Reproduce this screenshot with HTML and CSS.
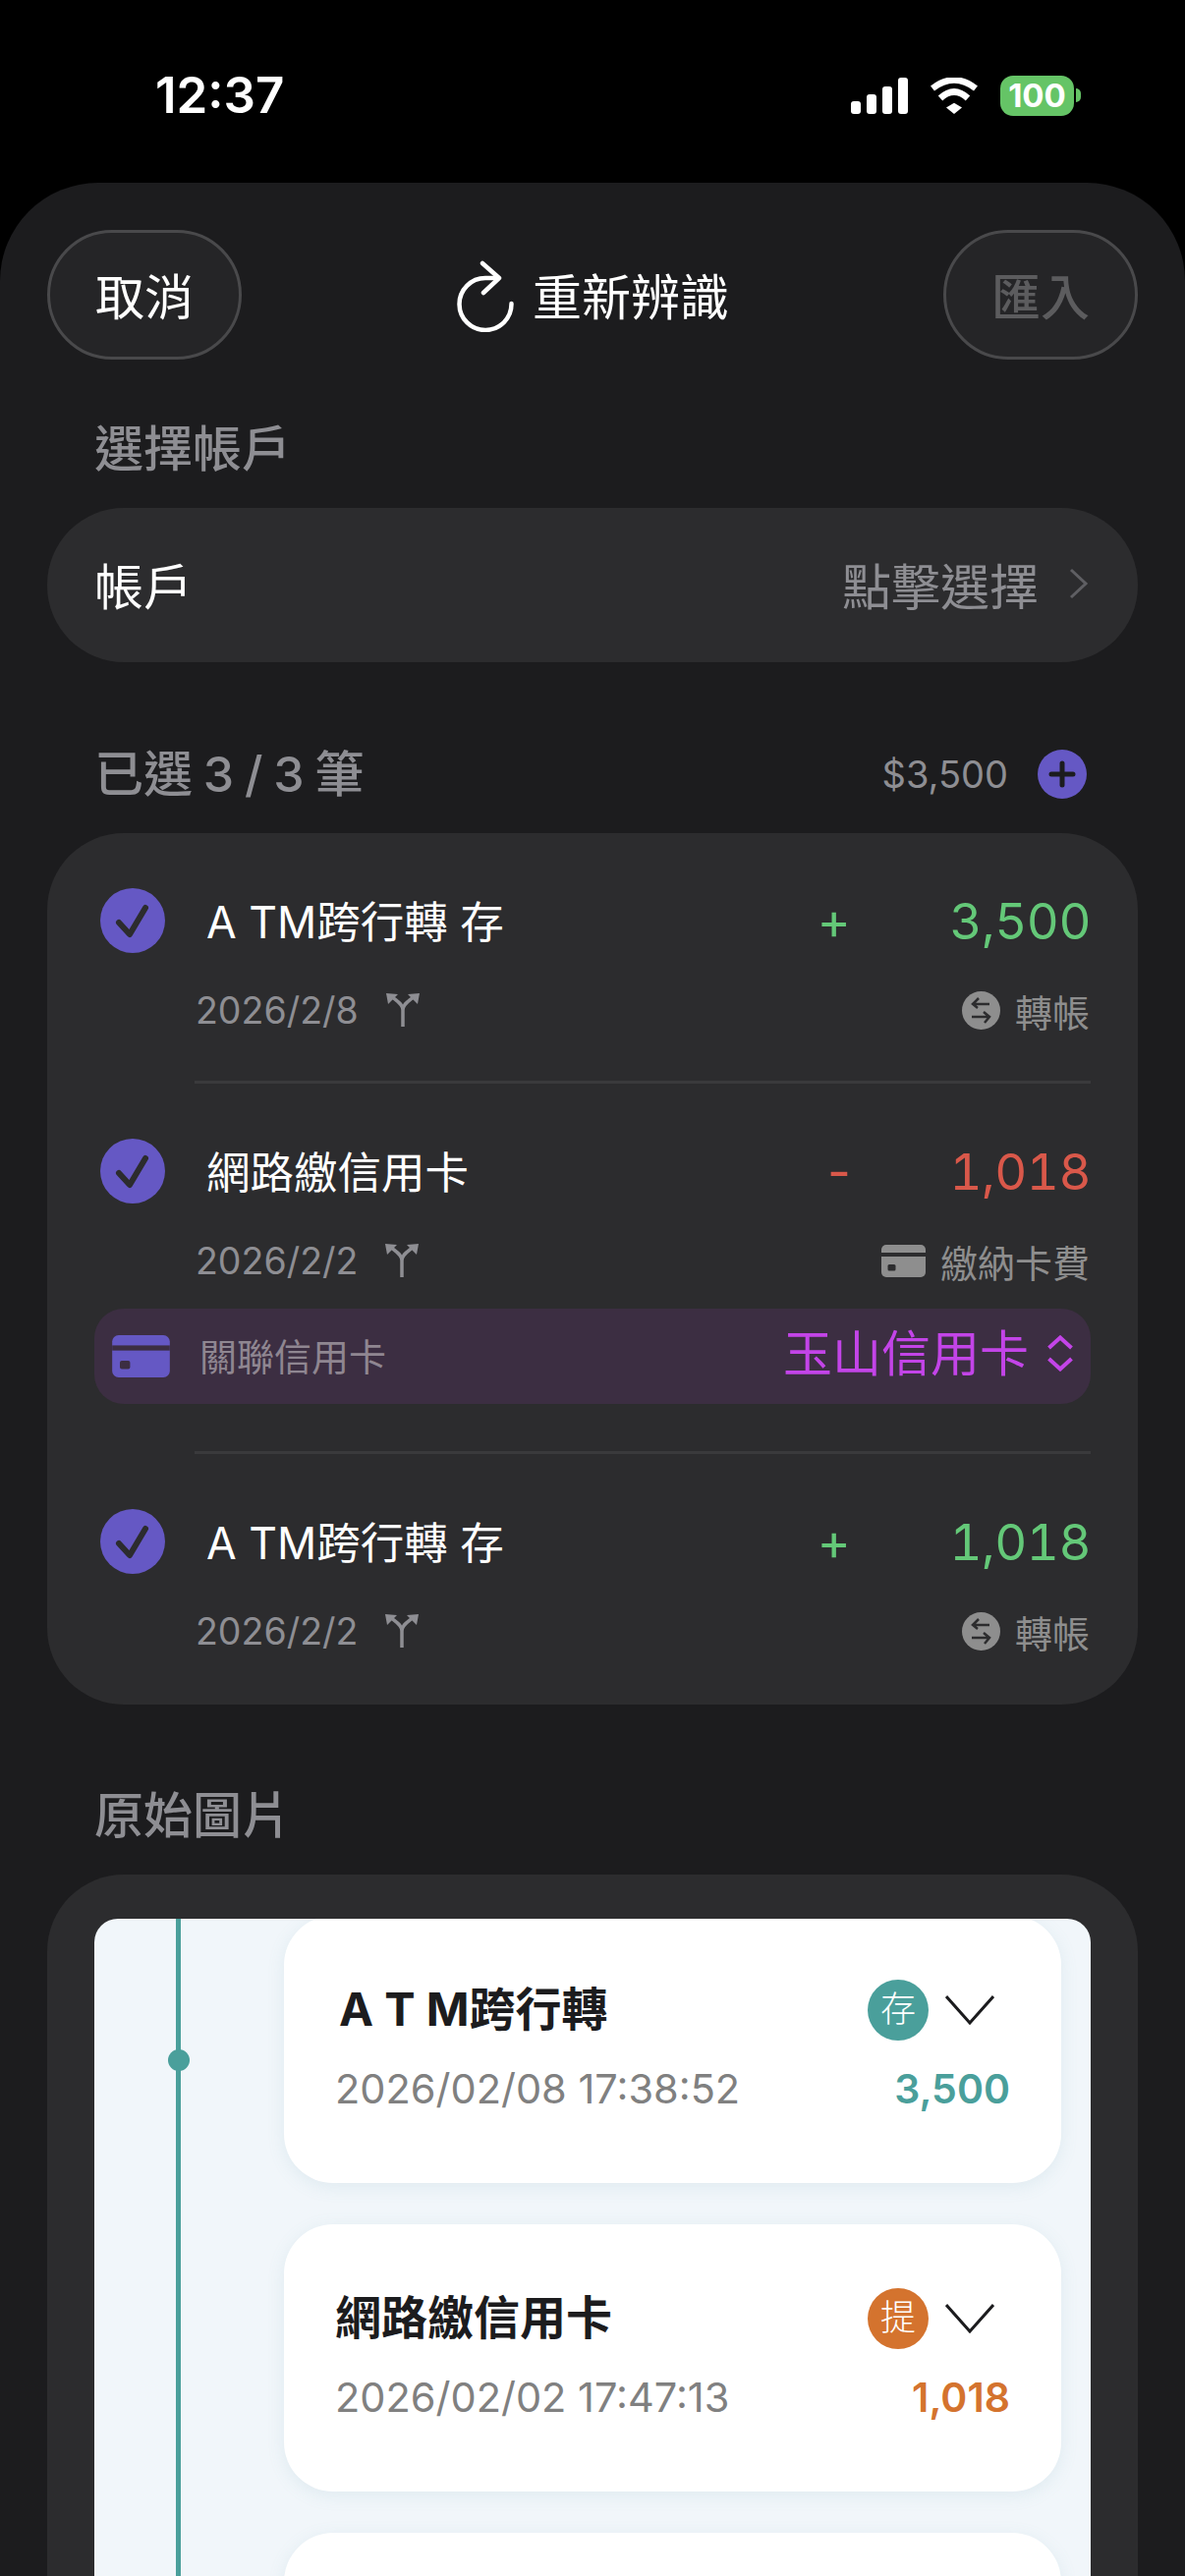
FILE: index.html
```html
<!DOCTYPE html>
<html lang="zh-Hant">
<head>
    <meta charset="UTF-8">
    <meta name="viewport" content="width=device-width, initial-scale=1.0">
    <title>重新辨識</title>
    <link rel="stylesheet" href="styles.css">
</head>
<body>
    <header class="statusbar">
        <div class="time">12:37</div>
        <div class="status-icons">
            <div class="signal"><span></span><span></span><span></span><span></span></div>
            <svg class="wifi" viewBox="0 0 50 37">
                <path d="M3 11Q25 -6 47 11" fill="none" stroke="#fff" stroke-width="6.5"/>
                <path d="M11 21Q25 8 39 21" fill="none" stroke="#fff" stroke-width="6.5"/>
                <path d="M17 30.6L25 25.7L33 30.6L25 37Z" fill="#fff"/>
            </svg>
            <div class="battery">
                <div class="battery-body">100</div>
                <div class="battery-nub"></div>
            </div>
        </div>
    </header>

    <main class="sheet">
        <div class="topbar">
            <button class="pill">取消</button>
            <div class="rescan">
                <svg class="rescan-icon" viewBox="0 0 60 75">
                    <path d="M42 20H30A26.5 26.5 0 1 0 56.5 46" fill="none" stroke="#fff" stroke-width="4.5" stroke-linecap="round"/>
                    <path d="M27 5L44 20L28 35" fill="none" stroke="#fff" stroke-width="4.5" stroke-linecap="round" stroke-linejoin="round"/>
                </svg>
                <span class="rescan-label">重新辨識</span>
            </div>
            <button class="pill pill-disabled">匯入</button>
        </div>

        <div class="section-label label-account">選擇帳戶</div>
        <div class="account-row">
            <span>帳戶</span>
            <div class="account-pick">
                <span>點擊選擇</span>
                <svg class="chevron-right" viewBox="0 0 20 32">
                    <path d="M2 2L17 16L2 30" fill="none" stroke="#5f5f63" stroke-width="3"/>
                </svg>
            </div>
        </div>

        <div class="selected-head">
            <div class="section-label selected-count">已選 3 / 3 筆</div>
            <div class="selected-total">
                <span>$3,500</span>
                <svg class="plus" viewBox="0 0 50 50">
                    <circle cx="25" cy="25" r="25" fill="#6558c4"/>
                    <path d="M14 25H36M25 14V36" stroke="#1c1c1e" stroke-width="5" stroke-linecap="round"/>
                </svg>
            </div>
        </div>

        <section class="card tx-card">
            <div class="tx">
                <div class="tx-main">
                    <svg class="check" viewBox="0 0 66 66">
                        <circle cx="33" cy="33" r="33" fill="#6558c4"/>
                        <path d="M19 35L30 47L46 20" fill="none" stroke="#2c2c2e" stroke-width="6" stroke-linecap="round" stroke-linejoin="round"/>
                    </svg>
                    <div class="tx-title">A TM跨行轉 存</div>
                    <div class="tx-sign green">+</div>
                    <div class="tx-amount green">3,500</div>
                </div>
                <div class="tx-meta">
                    <div class="tx-date">
                        <span>2026/2/8</span>
                        <svg class="split" viewBox="0 0 34 34">
                            <path d="M17 34V17C17 11 11 8 5 3M17 17C17 11 23 8 29 3" fill="none" stroke="#8e8e93" stroke-width="3.5"/>
                            <path d="M0 0L12 1L2 11ZM34 0L22 1L32 11Z" fill="#8e8e93"/>
                        </svg>
                    </div>
                    <div class="tx-type">
                        <svg class="transfer" viewBox="0 0 39 39">
                            <circle cx="19.5" cy="19.5" r="19.5" fill="#8e8e8e"/>
                            <path d="M28 13H11M17 7L11 13L16 17M10 26H28M22 21L28 26L23 32" fill="none" stroke="#2c2c2e" stroke-width="2.5"/>
                        </svg>
                        <span>轉帳</span>
                    </div>
                </div>
            </div>
            <div class="divider"></div>
            <div class="tx">
                <div class="tx-main">
                    <svg class="check" viewBox="0 0 66 66">
                        <circle cx="33" cy="33" r="33" fill="#6558c4"/>
                        <path d="M19 35L30 47L46 20" fill="none" stroke="#2c2c2e" stroke-width="6" stroke-linecap="round" stroke-linejoin="round"/>
                    </svg>
                    <div class="tx-title">網路繳信用卡</div>
                    <div class="tx-sign red">-</div>
                    <div class="tx-amount red">1,018</div>
                </div>
                <div class="tx-meta">
                    <div class="tx-date">
                        <span>2026/2/2</span>
                        <svg class="split" viewBox="0 0 34 34">
                            <path d="M17 34V17C17 11 11 8 5 3M17 17C17 11 23 8 29 3" fill="none" stroke="#8e8e93" stroke-width="3.5"/>
                            <path d="M0 0L12 1L2 11ZM34 0L22 1L32 11Z" fill="#8e8e93"/>
                        </svg>
                    </div>
                    <div class="tx-type">
                        <svg class="card-icon" viewBox="0 0 45 33">
                            <rect width="45" height="33" rx="5" fill="#8e8e8e"/>
                            <rect y="8" width="45" height="4" fill="#2c2c2e"/>
                            <rect x="6.5" y="20" width="8" height="6.5" rx="1.5" fill="#2c2c2e"/>
                        </svg>
                        <span>繳納卡費</span>
                    </div>
                </div>
                <div class="link-bar">
                    <svg class="card-icon-large" viewBox="0 0 45 33">
                        <rect width="45" height="33" rx="5" fill="#6558c4"/>
                        <rect y="8" width="45" height="4" fill="#3c2e42"/>
                        <rect x="6" y="20" width="8" height="6.5" rx="1.5" fill="#3c2e42"/>
                    </svg>
                    <span class="link-label">關聯信用卡</span>
                    <span class="link-value">玉山信用卡</span>
                    <svg class="updown" viewBox="0 0 26 37">
                        <path d="M1.5 13L13 2.5L24.5 13M1.5 24L13 34.5L24.5 24" fill="none" stroke="#c344e8" stroke-width="4"/>
                    </svg>
                </div>
            </div>
            <div class="divider"></div>
            <div class="tx">
                <div class="tx-main">
                    <svg class="check" viewBox="0 0 66 66">
                        <circle cx="33" cy="33" r="33" fill="#6558c4"/>
                        <path d="M19 35L30 47L46 20" fill="none" stroke="#2c2c2e" stroke-width="6" stroke-linecap="round" stroke-linejoin="round"/>
                    </svg>
                    <div class="tx-title">A TM跨行轉 存</div>
                    <div class="tx-sign green">+</div>
                    <div class="tx-amount green">1,018</div>
                </div>
                <div class="tx-meta">
                    <div class="tx-date">
                        <span>2026/2/2</span>
                        <svg class="split" viewBox="0 0 34 34">
                            <path d="M17 34V17C17 11 11 8 5 3M17 17C17 11 23 8 29 3" fill="none" stroke="#8e8e93" stroke-width="3.5"/>
                            <path d="M0 0L12 1L2 11ZM34 0L22 1L32 11Z" fill="#8e8e93"/>
                        </svg>
                    </div>
                    <div class="tx-type">
                        <svg class="transfer" viewBox="0 0 39 39">
                            <circle cx="19.5" cy="19.5" r="19.5" fill="#8e8e8e"/>
                            <path d="M28 13H11M17 7L11 13L16 17M10 26H28M22 21L28 26L23 32" fill="none" stroke="#2c2c2e" stroke-width="2.5"/>
                        </svg>
                        <span>轉帳</span>
                    </div>
                </div>
            </div>
        </section>

        <div class="section-label label-image">原始圖片</div>
        <section class="card image-card">
            <div class="shot">
                <div class="timeline"><div class="timeline-dot"></div></div>
                <div class="records">
                    <div class="record">
                        <div class="record-top">
                            <div class="record-title title-spaced">A T M跨行轉</div>
                            <div class="badge badge-teal">存</div>
                            <svg class="chevron-down" viewBox="0 0 50 30">
                                <path d="M1 1L25 28L49 1" fill="none" stroke="#1c1c1e" stroke-width="3"/>
                            </svg>
                        </div>
                        <div class="record-bottom">
                            <span class="record-date">2026/02/08 17:38:52</span>
                            <span class="record-amount teal">3,500</span>
                        </div>
                    </div>
                    <div class="record">
                        <div class="record-top">
                            <div class="record-title">網路繳信用卡</div>
                            <div class="badge badge-orange">提</div>
                            <svg class="chevron-down" viewBox="0 0 50 30">
                                <path d="M1 1L25 28L49 1" fill="none" stroke="#1c1c1e" stroke-width="3"/>
                            </svg>
                        </div>
                        <div class="record-bottom">
                            <span class="record-date">2026/02/02 17:47:13</span>
                            <span class="record-amount orange">1,018</span>
                        </div>
                    </div>
                    <div class="record record-empty"></div>
                </div>
            </div>
        </section>
    </main>
</body>
</html>
```

FILE: styles.css
```css
* {
    box-sizing: border-box;
}
html, body {
    margin: 0;
    padding: 0;
}
body {
    width: 1206px;
    height: 2622px;
    overflow: hidden;
    background: #000000;
    color: #ffffff;
    font-family: Inter, "Noto Sans CJK TC", sans-serif;
}
svg {
    display: block;
    flex-shrink: 0;
}

/* status bar */
.statusbar {
    height: 186px;
    padding: 67px 106px 0 158px;
    display: flex;
    justify-content: space-between;
    align-items: flex-start;
}
.time {
    font-size: 51px;
    line-height: 60px;
    font-weight: 600;
}
.status-icons {
    display: flex;
    align-items: center;
    height: 60px;
}
.signal {
    display: flex;
    align-items: flex-end;
    gap: 6px;
    height: 37px;
}
.signal span {
    width: 10px;
    background: #ffffff;
    border-radius: 3px;
}
.signal span:nth-child(1) { height: 13px; }
.signal span:nth-child(2) { height: 20px; }
.signal span:nth-child(3) { height: 28px; }
.signal span:nth-child(4) { height: 37px; }
.wifi {
    width: 50px;
    height: 37px;
    margin-left: 22px;
}
.battery {
    display: flex;
    align-items: center;
    gap: 2px;
    margin-left: 22px;
}
.battery-body {
    width: 75px;
    height: 41px;
    border-radius: 13px;
    background: #65c466;
    color: #ffffff;
    font-size: 33px;
    font-weight: 700;
    line-height: 41px;
    text-align: center;
}
.battery-nub {
    width: 5px;
    height: 14px;
    background: #65c466;
    border-radius: 0 5px 5px 0;
}

/* sheet */
.sheet {
    height: 2436px;
    overflow: hidden;
    padding: 48px 48px 0;
    background: #1c1c1e;
    border-radius: 100px 100px 0 0;
}
.topbar {
    display: flex;
    justify-content: space-between;
    align-items: center;
    height: 132px;
}
.pill {
    width: 198px;
    height: 132px;
    padding: 0 0 3px;
    border: 3px solid #49494b;
    border-radius: 66px;
    background: #252527;
    color: #ffffff;
    font-family: inherit;
    font-size: 50px;
}
.pill-disabled {
    color: #5c5c5e;
    font-weight: 500;
}
.rescan {
    display: flex;
    align-items: center;
    gap: 18px;
    font-size: 50px;
}
.rescan-label {
    padding-bottom: 3px;
}
.rescan-icon {
    width: 60px;
    height: 75px;
}
.section-label {
    padding-left: 48px;
    font-size: 50px;
    line-height: 60px;
    font-weight: 500;
    color: #8e8e93;
}
.label-account {
    margin-top: 61px;
}
.account-row {
    display: flex;
    justify-content: space-between;
    align-items: center;
    height: 157px;
    margin-top: 30px;
    padding: 0 50px 3px 48px;
    border-radius: 78px;
    background: #2c2c2e;
    font-size: 50px;
}
.account-pick {
    display: flex;
    align-items: center;
    gap: 31px;
    color: #8e8e93;
}
.chevron-right {
    width: 20px;
    height: 32px;
}
.selected-head {
    display: flex;
    justify-content: space-between;
    align-items: center;
    margin-top: 84px;
    height: 60px;
}
.selected-count {
    word-spacing: -2.5px;
}
.selected-total {
    display: flex;
    align-items: center;
    gap: 30px;
    padding-right: 52px;
    font-size: 38px;
    color: #8e8e93;
}
.plus {
    width: 50px;
    height: 50px;
}
.card {
    background: #2c2c2e;
    border-radius: 78px;
}

/* transactions */
.tx-card {
    height: 887px;
    margin-top: 30px;
}
.tx {
    padding: 56px 48px 0 54px;
}
.tx-main {
    display: flex;
    align-items: center;
    height: 66px;
}
.check {
    width: 66px;
    height: 66px;
}
.tx-title {
    flex: 1;
    margin: 0 0 3px 42px;
    font-size: 44.5px;
}
.tx-sign {
    width: 40px;
    font-size: 52px;
    text-align: right;
}
.tx-amount {
    width: 244px;
    font-size: 51px;
    font-variant-numeric: tabular-nums;
    letter-spacing: -0.5px;
    text-align: right;
}
.green { color: #64c878; }
.red { color: #d9584a; }
.tx-meta {
    display: flex;
    justify-content: space-between;
    align-items: center;
    height: 40px;
    margin-top: 38px;
    padding: 0 1px 0 97px;
}
.tx-date {
    display: flex;
    align-items: center;
    gap: 28px;
    font-size: 37.5px;
    color: #8e8e93;
}
.split {
    width: 34px;
    height: 34px;
}
.tx-type {
    display: flex;
    align-items: center;
    gap: 15px;
    font-size: 38px;
    color: #8e8e8e;
}
.transfer {
    width: 39px;
    height: 39px;
}
.card-icon {
    width: 45px;
    height: 33px;
}
.divider {
    height: 3px;
    margin: 52px 48px 0 150px;
    background: #3a3a3c;
}
.link-bar {
    display: flex;
    align-items: center;
    height: 97px;
    margin: 29px 0 -4px -6px;
    padding: 0 18px;
    border-radius: 30px;
    background: #3c2e42;
}
.card-icon-large {
    width: 59px;
    height: 43px;
}
.link-label {
    flex: 1;
    margin: 0 0 5px 30px;
    font-size: 38px;
    color: #8f8691;
}
.link-value {
    margin-bottom: 14px;
    font-size: 50px;
    color: #c344e8;
}
.updown {
    width: 26px;
    height: 37px;
    margin: 0 0 6px 19px;
}

/* original image */
.label-image {
    margin-top: 83px;
}
.image-card {
    height: 800px;
    margin-top: 30px;
    padding: 45px 48px 0;
}
.shot {
    display: flex;
    height: 760px;
    overflow: hidden;
    border-radius: 24px 24px 0 0;
    background: #f1f6fa;
}
.timeline {
    display: flex;
    justify-content: center;
    width: 5px;
    margin-left: 83px;
    padding-top: 133px;
    background: #4a9f9b;
}
.timeline-dot {
    flex-shrink: 0;
    width: 22px;
    height: 22px;
    border-radius: 50%;
    background: #4a9f9b;
}
.records {
    display: flex;
    flex-direction: column;
    gap: 42px;
    width: 791px;
    margin: -3px 0 0 105px;
}
.record {
    flex-shrink: 0;
    height: 272px;
    padding: 65px 52px 0;
    border-radius: 50px;
    background: #ffffff;
    box-shadow: 0 4px 18px rgba(100, 160, 170, 0.12);
}
.record-empty {
    height: 400px;
}
.record-top {
    display: flex;
    align-items: center;
    height: 62px;
    padding-right: 16px;
}
.record-title {
    flex: 1;
    margin-bottom: 10px;
    font-size: 47px;
    font-weight: 700;
    color: #1c1c1e;
}
.title-spaced {
    padding-left: 4px;
}
.badge {
    width: 62px;
    height: 62px;
    border-radius: 50%;
    color: #ffffff;
    font-size: 36px;
    font-weight: 300;
    line-height: 60px;
    text-align: center;
}
.badge-teal { background: #4a9f9b; }
.badge-orange { background: #d4732e; }
.chevron-down {
    width: 50px;
    height: 30px;
    margin-left: 17px;
}
.record-bottom {
    display: flex;
    justify-content: space-between;
    align-items: center;
    height: 44px;
    margin-top: 27px;
}
.record-date {
    font-size: 41.5px;
    color: #808080;
}
.record-amount {
    font-size: 41px;
    font-weight: 600;
}
.teal { color: #4a9f9b; }
.orange { color: #d4732e; }
```
